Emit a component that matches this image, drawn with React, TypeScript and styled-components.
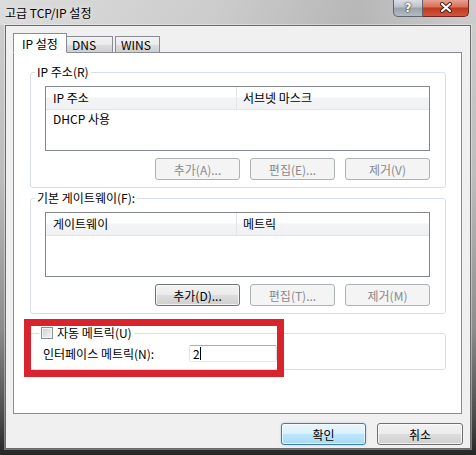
import { FC, ReactNode } from 'react'
import styled, { createGlobalStyle, css } from 'styled-components'

const GlobalStyle = createGlobalStyle`
  html, body {
    margin: 0;
    padding: 0;
    background: #2b2b2b;
  }
  body {
    font-family: "Noto Sans CJK KR", "Liberation Sans", sans-serif;
    font-size: 12px;
    color: #000;
  }
`

const Window = styled.div`
  position: relative;
  width: 476px;
  height: 455px;
  overflow: hidden;
  display: flex;
  flex-direction: column;
  background: linear-gradient(180deg, #cfcfcf 0%, #bcbcbc 40%, #8d8d8d 72%, #4a4a4a 92%, #262626 100%);
`

const TitleBar = styled.div`
  height: 25px;
  flex: none;
  display: flex;
  align-items: flex-start;
  padding: 0 7px 0 5px;
  background: linear-gradient(90deg, rgba(225, 225, 225, 0.7) 0%, rgba(200, 200, 200, 0.3) 45%, rgba(140, 140, 140, 0.35) 75%, rgba(200, 200, 200, 0.2) 100%);
`

const Title = styled.div`
  margin-top: 6px;
  line-height: 14px;
  font-size: 12px;
  text-shadow: 0 0 6px rgba(255, 255, 255, 0.9);
`

const CaptionButtons = styled.div`
  margin-left: auto;
  display: flex;
  margin-top: -1px;
`

const CaptionButton = styled.div<{ $close?: boolean }>`
  height: 17px;
  display: flex;
  align-items: center;
  justify-content: center;
  border: 1px solid #5f646b;
  border-top: none;
  color: #fff;
  font-family: "DejaVu Sans", sans-serif;
  font-weight: bold;
  font-size: 12px;
  text-shadow: 0 0 2px #333, 0 0 1px #000;
  ${p =>
    p.$close
      ? css`
          width: 45px;
          border-color: #6b2a1f;
          border-left: none;
          border-radius: 0 0 5px 0;
          background: linear-gradient(180deg, #e9a898 0%, #d9735c 45%, #c03a1f 55%, #d4563b 100%);
        `
      : css`
          width: 28px;
          border-radius: 0 0 0 5px;
          background: linear-gradient(180deg, #dfe3e8 0%, #bcc3cb 45%, #9aa3ad 55%, #b3bbc4 100%);
        `}
`

const Client = styled.div`
  flex: 1;
  margin: 0 5px 6px 5px;
  border: 1px solid #6b6b6b;
  background: #f0f0f0;
  display: flex;
  flex-direction: column;
  padding: 7px 8px 3px 7px;
  box-shadow: 0 0 0 1px rgba(255, 255, 255, 0.35);
`

const TabStrip = styled.div`
  display: flex;
  align-items: flex-end;
  gap: 2px;
  height: 20px;
  margin-bottom: -1px;
  position: relative;
  z-index: 1;
`

const Tab = styled.div<{ $active?: boolean; $w: number; $afterActive?: boolean }>`
  width: ${p => p.$w}px;
  box-sizing: border-box;
  border: 1px solid #898c95;
  line-height: 15px;
  ${p =>
    p.$active
      ? css`
          height: 20px;
          padding-left: 8px;
          padding-top: 2px;
          background: #fff;
          border-bottom-color: #fff;
          margin-right: -2px;
        `
      : css`
          height: 17px;
          padding-left: 5px;
          background: linear-gradient(180deg, #f2f2f2 0%, #ebebeb 50%, #dddddd 51%, #cfcfcf 100%);
        `}
  ${p =>
    p.$afterActive &&
    css`
      border-left: none;
    `}
`

const Panel = styled.div`
  flex: 1;
  border: 1px solid #898c95;
  background: #fff;
  padding: 12px 15px 0 16px;
  display: flex;
  flex-direction: column;
`

const GroupBox = styled.fieldset<{ $gap?: number }>`
  margin: ${p => p.$gap ?? 0}px 0 0 0;
  border: 1px solid #d5dfe5;
  border-radius: 3px;
  padding: 7px 15px 7px 14px;
  min-width: 0;
`

const Legend = styled.legend<{ $indent: number }>`
  padding: 0 2px;
  margin-left: ${p => p.$indent}px;
  line-height: 14px;
  display: flex;
  align-items: center;
  gap: 4px;
`

const ListView = styled.div`
  height: 65px;
  box-sizing: border-box;
  border: 1px solid #828790;
  background: #fff;
`

const ListHeader = styled.div`
  display: grid;
  grid-template-columns: 190px 1fr;
  height: 23px;
  box-sizing: border-box;
  border-bottom: 1px solid #e2e4e7;
  background: linear-gradient(180deg, #ffffff 0%, #ffffff 45%, #f3f4f6 50%, #f0f1f3 100%);
`

const HeaderCell = styled.div`
  line-height: 22px;
  padding-left: 7px;
  & + & {
    border-left: 1px solid #e3e5e8;
    padding-left: 6px;
  }
`

const ListRow = styled.div`
  line-height: 16px;
  padding: 1px 0 0 7px;
`

const ButtonRow = styled.div`
  display: flex;
  justify-content: flex-end;
  gap: 10px;
  margin-top: 7px;
`

const Button = styled.button<{ $primary?: boolean; $w?: number }>`
  font: inherit;
  width: ${p => p.$w ?? 85}px;
  height: 22px;
  padding: 0;
  border-radius: 3px;
  border: 1px solid #707070;
  color: #000;
  background: linear-gradient(180deg, #f2f2f2 0%, #ebebeb 50%, #dddddd 51%, #cfcfcf 100%);
  box-shadow: inset 0 0 0 1px rgba(255, 255, 255, 0.7);
  &:disabled {
    border-color: #adb2b5;
    background: #f4f4f4;
    color: #8a8a8a;
    box-shadow: none;
  }
  ${p =>
    p.$primary &&
    css`
      border-color: #3c7fb1;
      background: linear-gradient(180deg, #eaf6fd 0%, #d9f0fc 50%, #bee6fd 51%, #a7d9f5 100%);
      box-shadow: inset 0 0 0 1px rgba(255, 255, 255, 0.6), 0 0 2px rgba(60, 127, 177, 0.4);
    `}
`

const CheckBox = styled.span`
  width: 12px;
  height: 12px;
  box-sizing: border-box;
  border: 1px solid #8e8f8f;
  background: linear-gradient(135deg, #c9ccd2 0%, #e6e7ea 60%, #f4f4f4 100%);
  box-shadow: inset 0 0 0 1px #f6f6f6;
`

const FieldRow = styled.div`
  display: flex;
  align-items: center;
  margin: -2px 0 0 -2px;
`

const FieldLabel = styled.div`
  width: 146px;
  line-height: 17px;
`

const TextBox = styled.div`
  width: 88px;
  height: 17px;
  box-sizing: border-box;
  border: 1px solid;
  border-color: #abadb3 #dbdfe6 #e3e9ef #e2e3ea;
  border-radius: 2px;
  background: #fff;
  display: flex;
  align-items: center;
  padding-left: 3px;
  line-height: 14px;
`

const Caret = styled.span`
  width: 1px;
  height: 13px;
  background: #000;
`

const Footer = styled.div`
  display: flex;
  justify-content: flex-end;
  gap: 11px;
  margin: 9px -1px 0 0;
`

const Highlight = styled.div`
  position: absolute;
  left: 24px;
  top: 319px;
  width: 260px;
  height: 58px;
  box-sizing: border-box;
  border: 7px solid #d9232d;
  pointer-events: none;
`

const CloseGlyph: FC = () => (
  <svg width="14" height="11" viewBox="0 0 14 11">
    <path d="M3 2 L11 9 M11 2 L3 9" stroke="#4a1a12" strokeWidth="4" strokeLinecap="round" />
    <path d="M3 2 L11 9 M11 2 L3 9" stroke="#fff" strokeWidth="2.2" strokeLinecap="round" />
  </svg>
)

const ListBox: FC<{ cols: [string, string]; rows?: string[] }> = ({ cols, rows }) => (
  <ListView>
    <ListHeader>
      <HeaderCell>{cols[0]}</HeaderCell>
      <HeaderCell>{cols[1]}</HeaderCell>
    </ListHeader>
    {rows?.map((r, i) => (
      <ListRow key={i}>{r}</ListRow>
    ))}
  </ListView>
)

const ActionButtons: FC<{ labels: string[]; enabled?: number }> = ({ labels, enabled }) => (
  <ButtonRow>
    {labels.map((l, i) => (
      <Button key={l} disabled={i !== enabled}>
        {l}
      </Button>
    ))}
  </ButtonRow>
)

// legend sits inside the fieldset's padding, so the indent is negative
const Group: FC<{ legend: ReactNode; gap?: number; indent?: number; children: ReactNode }> = ({
  legend,
  gap,
  indent = -10,
  children,
}) => (
  <GroupBox $gap={gap}>
    <Legend $indent={indent}>{legend}</Legend>
    {children}
  </GroupBox>
)

export default function App() {
  return (
    <>
      <GlobalStyle />
      <Window>
        <TitleBar>
          <Title>고급 TCP/IP 설정</Title>
          <CaptionButtons>
            <CaptionButton>?</CaptionButton>
            <CaptionButton $close>
              <CloseGlyph />
            </CaptionButton>
          </CaptionButtons>
        </TitleBar>
        <Client>
          <TabStrip>
            <Tab $active $w={54}>IP 설정</Tab>
            <Tab $w={46} $afterActive>DNS</Tab>
            <Tab $w={45}>WINS</Tab>
          </TabStrip>
          <Panel>
            <Group legend="IP 주소(R)">
              <ListBox cols={['IP 주소', '서브넷 마스크']} rows={['DHCP 사용']} />
              <ActionButtons labels={['추가(A)...', '편집(E)...', '제거(V)']} />
            </Group>
            <Group legend="기본 게이트웨이(F):" gap={3}>
              <ListBox cols={['게이트웨이', '메트릭']} />
              <ActionButtons labels={['추가(D)...', '편집(T)...', '제거(M)']} enabled={0} />
            </Group>
            <Group
              gap={12}
              indent={-6}
              legend={
                <>
                  <CheckBox />
                  자동 메트릭(U)
                </>
              }
            >
              <FieldRow>
                <FieldLabel>인터페이스 메트릭(N):</FieldLabel>
                <TextBox>
                  2<Caret />
                </TextBox>
              </FieldRow>
            </Group>
          </Panel>
          <Footer>
            <Button $primary $w={85}>확인</Button>
            <Button $w={86}>취소</Button>
          </Footer>
        </Client>
        <Highlight />
      </Window>
    </>
  )
}
